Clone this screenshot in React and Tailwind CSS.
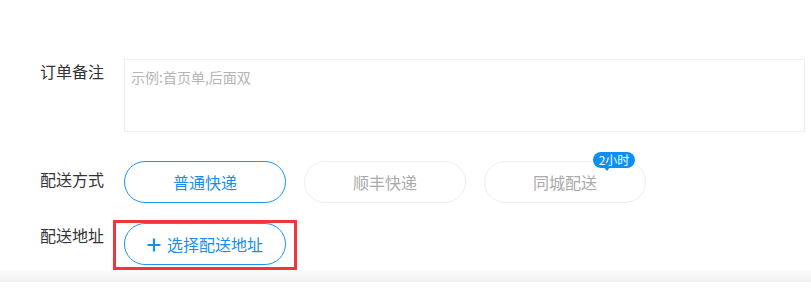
import React from "react";

const font = { fontFamily: '"Noto Sans CJK SC", "Noto Sans", sans-serif' };

function Label({ children, className = "" }) {
  return (
    <div className={`w-[84px] shrink-0 text-[16px] leading-[22px] text-[#333] ${className}`}>
      {children}
    </div>
  );
}

function Option({ children, active, badge }) {
  return (
    <div
      className={`relative flex h-[42px] w-[162px] items-center justify-center rounded-full border text-[16px] ${
        active ? "border-[#1f95f2] text-[#1a8df0]" : "border-[#eeeeee] text-[#aaaaaa]"
      }`}
    >
      {children}
      {badge && (
        <div className="absolute left-[108px] top-[-10px] flex h-[16px] w-[42px] items-center justify-center rounded-full bg-[#0b8ff2] text-[12px] leading-none text-white">
          {badge}
          <span className="absolute left-[10px] top-[14px] h-0 w-0 border-l-[4px] border-r-[4px] border-t-[5px] border-l-transparent border-r-transparent border-t-[#0b8ff2]" />
        </div>
      )}
    </div>
  );
}

export default function App() {
  return (
    <div className="h-[292px] w-[811px] overflow-hidden bg-white" style={font}>
      <div className="pl-[40px] pr-[6px] pt-[59px]">
        <div className="flex">
          <Label className="mt-[1px]">订单备注</Label>
          <div className="h-[73px] w-[681px] border border-[#eeeeee] px-[6px] pt-[7px] text-[14px] leading-[20px] text-[#b3b5ba]">
            示例:首页单,后面双
          </div>
        </div>
        <div className="mt-[29px] flex">
          <Label className="mt-[7px]">配送方式</Label>
          <div className="flex gap-[18px]">
            <Option active>普通快递</Option>
            <Option>顺丰快递</Option>
            <Option badge="2小时">同城配送</Option>
          </div>
        </div>
        <div className="mt-[17px] flex">
          <Label className="mt-[4px]">配送地址</Label>
          <div className="ml-[-11px] border-[3px] border-[#f2353a] px-[8px] pb-[2px]">
            <div className="flex h-[42px] w-[162px] items-center justify-center gap-[6px] rounded-full border border-[#1f95f2] text-[16px] text-[#1a8df0]">
              <svg width="14" height="14" viewBox="0 0 14 14" className="mt-[1px]">
                <path d="M7 0.5V13.5M0.5 7H13.5" stroke="#1a8df0" strokeWidth="2.2" />
              </svg>
              <span>选择配送地址</span>
            </div>
          </div>
        </div>
      </div>
      <div className="h-[12px] w-full bg-gradient-to-b from-[#fcfcfc] to-[#f1f1f1]" />
    </div>
  );
}
